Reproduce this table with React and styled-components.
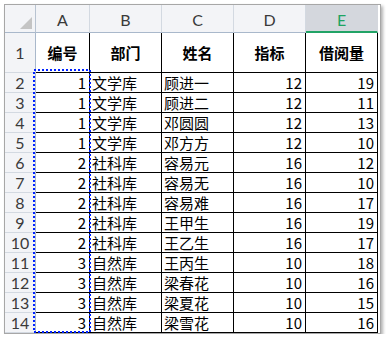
import React from "react";
import styled, { createGlobalStyle } from "styled-components";

const GlobalStyle = createGlobalStyle`
  html, body {
    margin: 0;
    padding: 0;
    background: #ffffff;
  }
`;

const Frame = styled.div`
  position: relative;
  width: fit-content;
  margin: 4px 0 0 4px;
  padding-right: 2px;
  border: 1px solid #a7a7a7;
  background: #ffffff;
  box-shadow: 2px 2px 3px rgba(0, 0, 0, 0.3);
`;

const Sheet = styled.div`
  display: grid;
  grid-template-columns: 31px 54px 72px 72px 72px 72px;
  grid-template-rows: 28px 40px repeat(13, 20px);
`;

/* 左上角 全选 */
const Corner = styled.div`
  display: flex;
  align-items: flex-end;
  justify-content: flex-end;
  padding: 0 3px 3px 0;
  box-sizing: border-box;
  background: #f3f4f7;
  border-right: 1px solid #b8c3d1;
  border-bottom: 1px solid #a9b8cb;
`;

const SelectAll = styled.div`
  width: 12px;
  height: 12px;
  background: #c4c4c4;
  clip-path: polygon(100% 0, 100% 100%, 0 100%);
`;

const ColHead = styled.div`
  display: flex;
  align-items: center;
  justify-content: center;
  box-sizing: border-box;
  padding-top: 2px;
  font-family: Lato, "Open Sans", sans-serif;
  font-size: 16px;
  color: ${(p) => (p.$active ? "#1ea462" : "#3a3a3a")};
  background: ${(p) => (p.$active ? "#d4d7dd" : "#f3f4f7")};
  border-right: 1px solid ${(p) => (p.$active ? "#d4d7dd" : "#d3d9e1")};
  border-bottom: ${(p) => (p.$active ? "2px solid #21a366" : "1px solid #a9b8cb")};
`;

const RowHead = styled.div`
  display: flex;
  align-items: center;
  justify-content: center;
  box-sizing: border-box;
  font-family: Lato, "Open Sans", sans-serif;
  font-size: 16px;
  color: #3a3a3a;
  background: #f3f4f7;
  border-right: 1px solid #a9b8cb;
  border-bottom: 1px solid #d3d9e1;
`;

const Cell = styled.div`
  display: flex;
  align-items: center;
  justify-content: ${(p) =>
    p.$align === "right" ? "flex-end" : p.$align === "center" ? "center" : "flex-start"};
  box-sizing: border-box;
  padding: 0 ${(p) => (p.$align === "right" ? "3px" : "0")} 0 ${(p) => (p.$align === "left" ? "2px" : "0")};
  font-family: "Noto Sans CJK SC", "Liberation Sans", sans-serif;
  font-size: 15px;
  font-weight: ${(p) => (p.$bold ? 700 : 400)};
  color: #000000;
  white-space: nowrap;
  border-right: 1px solid #000000;
  border-bottom: 1px solid #000000;
`;

/* 复制选区的蚂蚁线 */
const Marquee = styled.svg`
  position: absolute;
  left: 28px;
  top: 64px;
  pointer-events: none;
`;

const columns = ["A", "B", "C", "D", "E"];
const headers = ["编号", "部门", "姓名", "指标", "借阅量"];

const rows = [
  [1, "文学库", "顾进一", 12, 19],
  [1, "文学库", "顾进二", 12, 11],
  [1, "文学库", "邓圆圆", 12, 13],
  [1, "文学库", "邓方方", 12, 10],
  [2, "社科库", "容易元", 16, 12],
  [2, "社科库", "容易无", 16, 10],
  [2, "社科库", "容易难", 16, 17],
  [2, "社科库", "王甲生", 16, 19],
  [2, "社科库", "王乙生", 16, 17],
  [3, "自然库", "王丙生", 10, 18],
  [3, "自然库", "梁春花", 10, 16],
  [3, "自然库", "梁夏花", 10, 15],
  [3, "自然库", "梁雪花", 10, 16],
];

export default function App() {
  return (
    <>
      <GlobalStyle />
      <Frame>
        <Sheet>
          <Corner>
            <SelectAll />
          </Corner>
          {columns.map((c) => (
            <ColHead key={c} $active={c === "E"}>
              {c}
            </ColHead>
          ))}

          <RowHead>1</RowHead>
          {headers.map((h) => (
            <Cell key={h} $align="center" $bold>
              {h}
            </Cell>
          ))}

          {rows.map((r, i) => (
            <React.Fragment key={i}>
              <RowHead>{i + 2}</RowHead>
              <Cell $align="right">{r[0]}</Cell>
              <Cell $align="left">{r[1]}</Cell>
              <Cell $align="left">{r[2]}</Cell>
              <Cell $align="right">{r[3]}</Cell>
              <Cell $align="right">{r[4]}</Cell>
            </React.Fragment>
          ))}
        </Sheet>
        <Marquee width="58" height="264" viewBox="0 0 58 264">
          <rect
            x="1"
            y="1"
            width="56"
            height="262"
            fill="none"
            stroke="#0022ff"
            strokeWidth="2"
            strokeDasharray="2 2"
            shapeRendering="crispEdges"
          />
        </Marquee>
      </Frame>
    </>
  );
}
